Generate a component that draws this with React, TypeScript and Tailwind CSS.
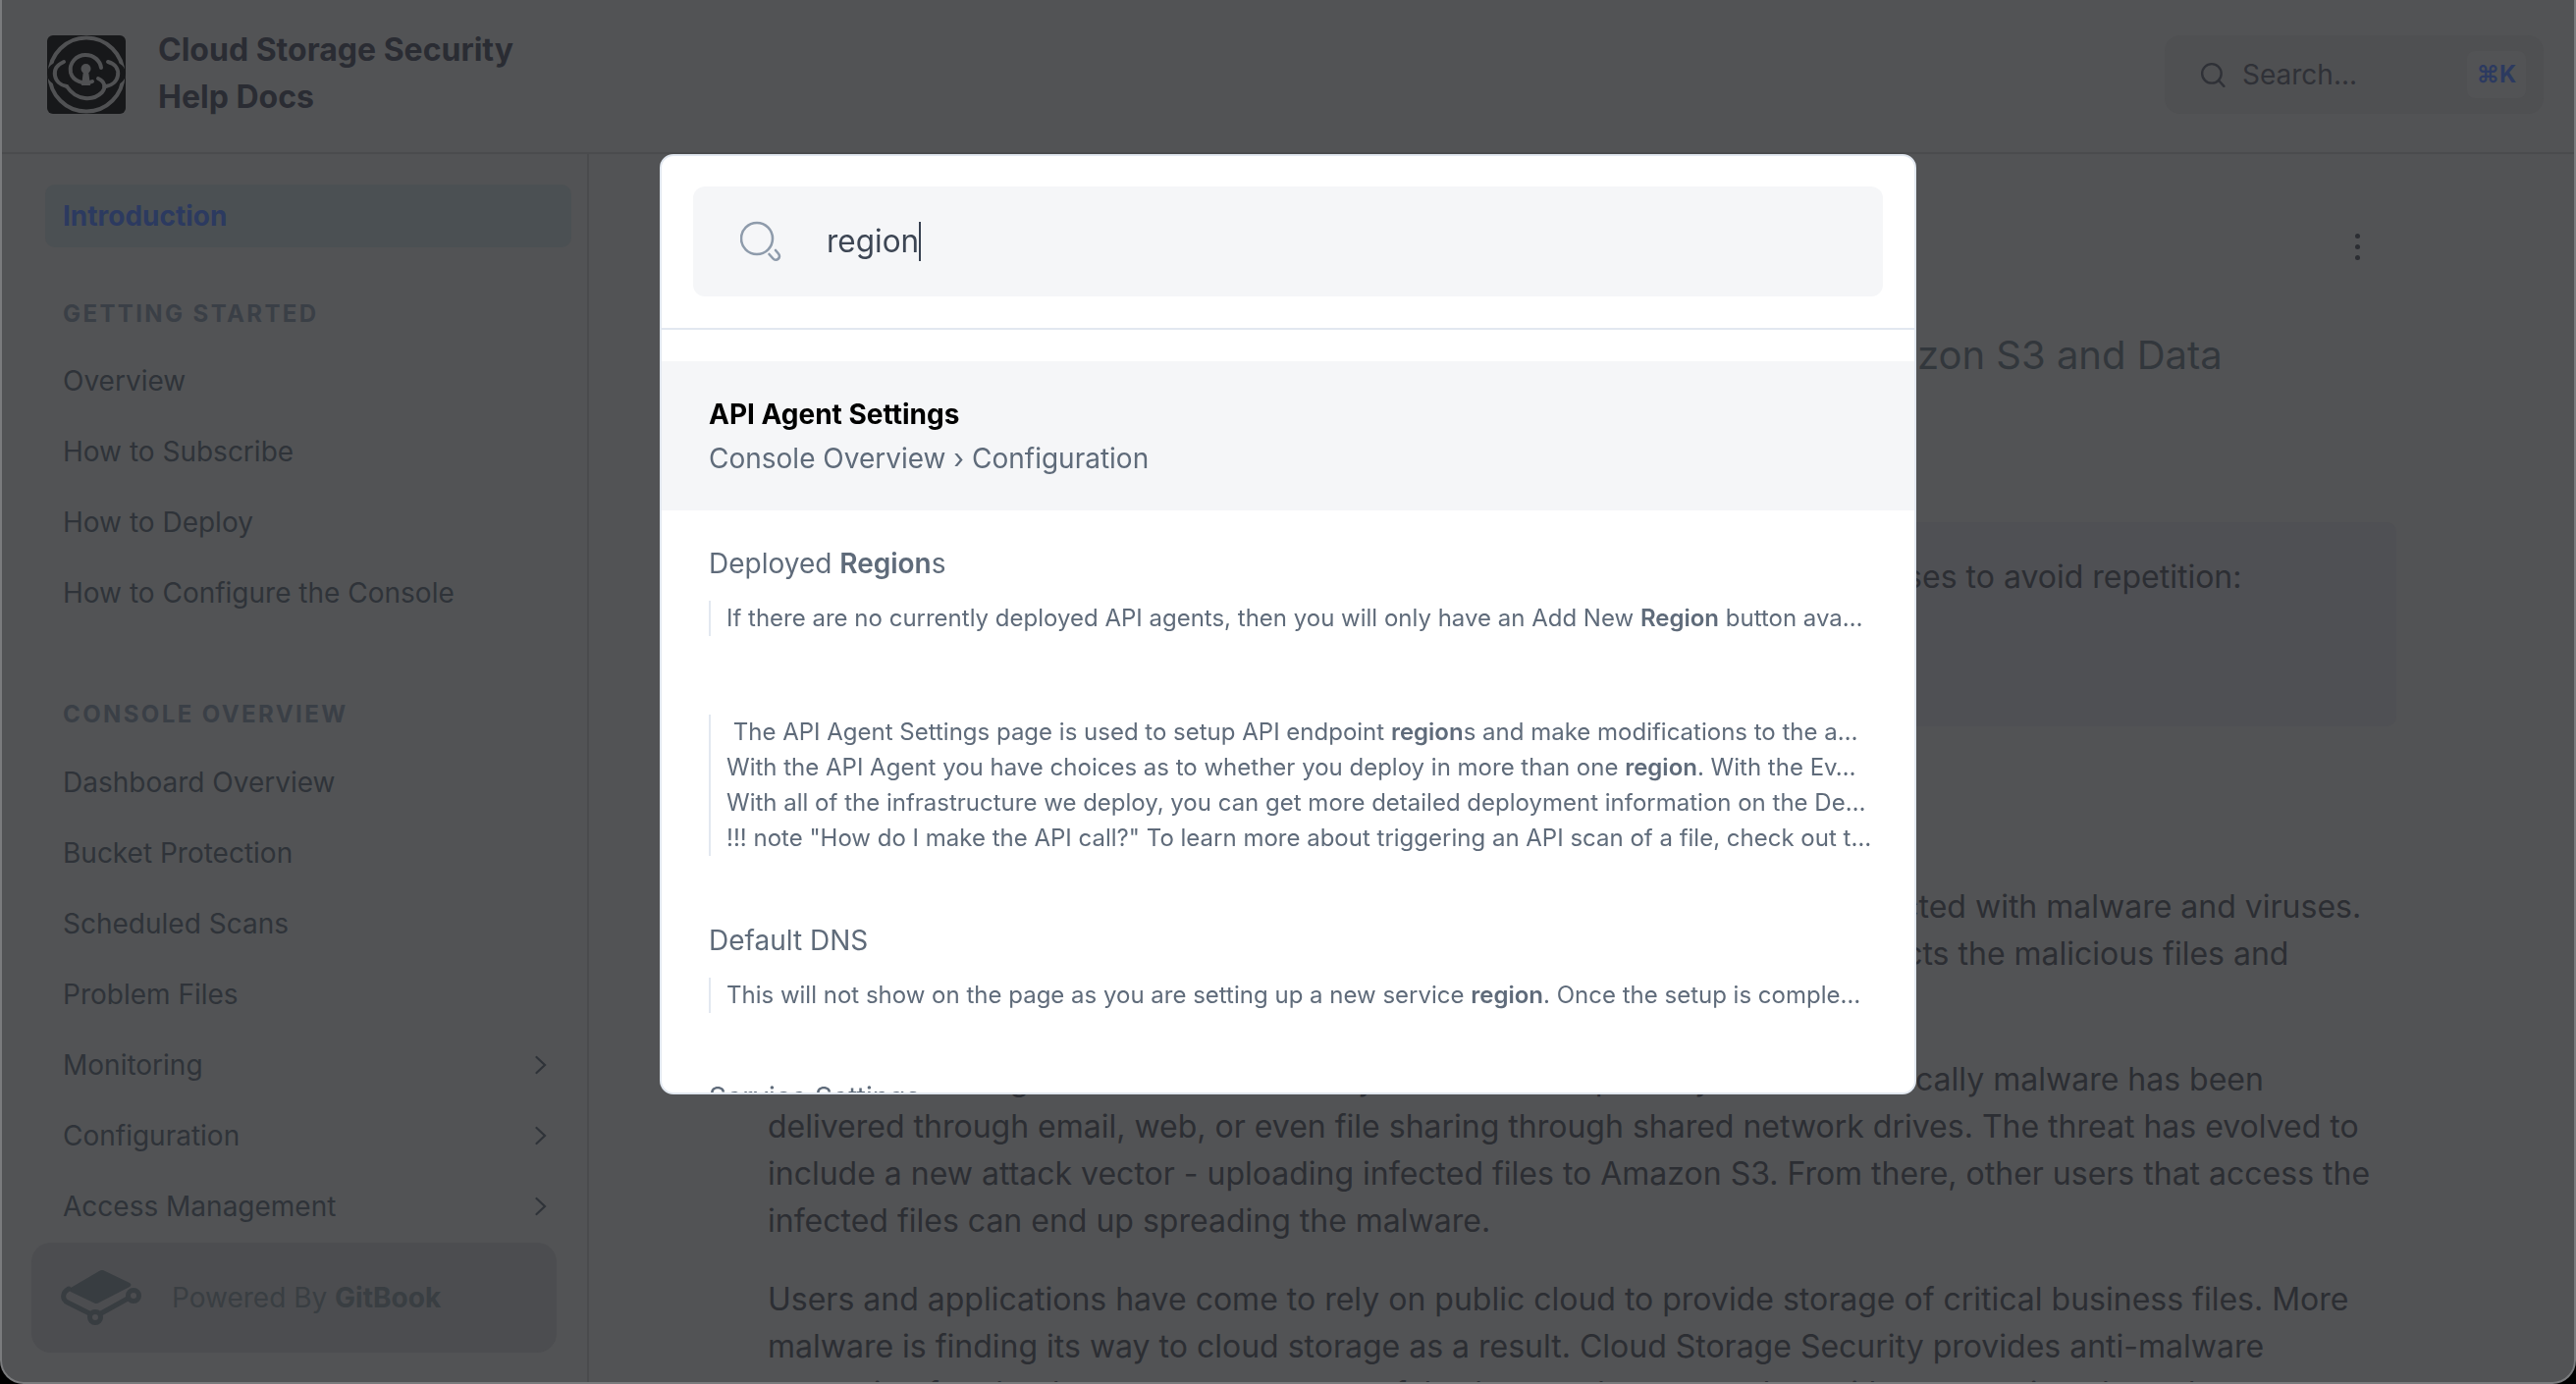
const gettingStarted = ["Overview", "How to Subscribe", "How to Deploy", "How to Configure the Console"];

const consoleOverview = [
  { label: "Dashboard Overview" },
  { label: "Bucket Protection" },
  { label: "Scheduled Scans" },
  { label: "Problem Files" },
  { label: "Monitoring", nested: true },
  { label: "Configuration", nested: true },
  { label: "Access Management", nested: true },
];

function Logo() {
  return (
    <svg viewBox="0 0 80 80" className="h-[80px] w-[80px] shrink-0">
      <rect width="80" height="80" rx="6" fill="#17181a" />
      <circle cx="40" cy="40" r="37.5" fill="none" stroke="#505153" strokeWidth="4" />
      <ellipse cx="13" cy="39" rx="13" ry="12" fill="#17181a" />
      <ellipse cx="67" cy="39" rx="13" ry="12" fill="#17181a" />
      <g fill="none" stroke="#505153" strokeWidth="4" strokeLinecap="round">
        <path d="M17 27 C10 30 7 35 8 41 C9 47 14 51 20 52" />
        <path d="M62 27 C70 29 73 35 72 41 C71 47 66 51 60 52" />
        <path d="M46 47 C37 51 26 46 24 38 C22 28 30 20 39 20 C48 20 54 26 55 33" />
        <path d="M52 44 C59 47 60 53 56 58 C47 67 30 67 20 52" />
      </g>
      <circle cx="39.5" cy="34" r="5" fill="#505153" />
      <path d="M37 36 L42 36 L44 51 L35 51 Z" fill="#505153" />
    </svg>
  );
}

function GitBookIcon() {
  return (
    <svg viewBox="0 0 84 62" className="h-[62px] w-[84px] shrink-0">
      <path
        d="M40 4 Q43 2 46 4 L71 16 Q74 18 71 20 L40 36 Q37 38 34 36 L11 25 Q8 23 11 21 Z"
        fill="#383d41"
      />
      <g fill="none" stroke="#383d41" strokeWidth="5" strokeLinecap="round">
        <path d="M9 22 C2 26 2 33 8 36 L30 47" />
        <path d="M42 47 L69 32" />
        <circle cx="36" cy="51" r="5.5" />
        <circle cx="75" cy="29" r="5.5" />
      </g>
    </svg>
  );
}

function SearchGlyph() {
  return (
    <svg viewBox="0 0 42 42" className="h-[42px] w-[42px] shrink-0" fill="none" stroke="#8e9bab" strokeWidth="2.6">
      <circle cx="17" cy="18" r="16" />
      <path d="M36 30 L39 33.5 A3.6 3.6 0 0 1 33.5 38.5 L29.5 34" strokeLinecap="round" />
    </svg>
  );
}

function Chevron() {
  return (
    <svg viewBox="0 0 14 20" className="h-[20px] w-[14px]" fill="none" stroke="#2f3339" strokeWidth="2.2" strokeLinecap="round">
      <path d="M2.5 2 L11 10 L2.5 18" />
    </svg>
  );
}

function SectionLabel({ children }: { children: React.ReactNode }) {
  return <div className="px-[18px] text-[24px] font-bold leading-[30px] tracking-[0.1em] text-[#3a3f46]">{children}</div>;
}

function NavItem({ label, nested }: { label: string; nested?: boolean }) {
  return (
    <div className="flex h-[72px] items-center justify-between pl-[18px] pr-[24px] text-[28px] text-[#2f3339]">
      <span>{label}</span>
      {nested && <Chevron />}
    </div>
  );
}

function Sidebar() {
  return (
    <aside className="flex w-[598px] shrink-0 flex-col border-r-2 border-[#4a4b4d] pl-[44px] pr-[16px]">
      <div className="mt-[31px] flex h-[64px] shrink-0 items-center rounded-[10px] bg-[#4b5053] px-[18px] text-[28px] font-bold text-[#2c3a60]">
        Introduction
      </div>
      <div className="mt-[53px]">
        <SectionLabel>GETTING STARTED</SectionLabel>
      </div>
      <div className="mt-[17px]">
        {gettingStarted.map((label) => (
          <NavItem key={label} label={label} />
        ))}
      </div>
      <div className="mt-[73px]">
        <SectionLabel>CONSOLE OVERVIEW</SectionLabel>
      </div>
      <div className="mt-[18px]">
        {consoleOverview.map((item) => (
          <NavItem key={item.label} label={item.label} nested={item.nested} />
        ))}
      </div>
      <div className="-ml-[14px] mt-[1px] flex h-[112px] w-[535px] shrink-0 items-center gap-[32px] rounded-[20px] bg-[#4c4d50] pl-[29px] text-[28px] text-[#393e42]">
        <GitBookIcon />
        <span className="-ml-[2px]">
          Powered By <b className="font-bold">GitBook</b>
        </span>
      </div>
    </aside>
  );
}

function Article() {
  return (
    <main className="min-w-0 flex-1 pl-[182px] pr-[181px] text-[32px] leading-[48px] text-[#2c2e33]">
      <div className="flex h-[181px] justify-end pr-[37px] pt-[81px]">
        <div className="flex flex-col gap-[6px]">
          <span className="h-[5px] w-[5px] rounded-full bg-[#2c2e33]" />
          <span className="h-[5px] w-[5px] rounded-full bg-[#2c2e33]" />
          <span className="h-[5px] w-[5px] rounded-full bg-[#2c2e33]" />
        </div>
      </div>
      <h2 className="whitespace-nowrap pl-[7px] text-[40px] leading-[48px] text-[#32373c]">
        Easy Antivirus for Amazon S3 and Data Classification for Amazon S3 and Data
      </h2>
      <div className="mt-[146px] h-[208px] rounded-[10px] bg-[#4f5054] pl-[47px] pr-[32px] pt-[32px]">
        Throughout the documentation we will use the following abbreviated phrases to avoid repetition:
      </div>
      <div className="mt-[160px] space-y-[32px]">
        <p>
          Amazon S3 buckets and the files stored in them can very easily become infected with malware and viruses.
          <br />
          Antivirus from Cloud Storage Security scans all objects in your buckets, detects the malicious files and
          <br />
          quarantines them before they can cause harm.
        </p>
        <p>
          Malware has long been a severe security threat to enterprise systems. Historically malware has been
          <br />
          delivered through email, web, or even file sharing through shared network drives. The threat has evolved to
          <br />
          include a new attack vector - uploading infected files to Amazon S3. From there, other users that access the
          <br />
          infected files can end up spreading the malware.
        </p>
        <p>
          Users and applications have come to rely on public cloud to provide storage of critical business files. More
          <br />
          malware is finding its way to cloud storage as a result. Cloud Storage Security provides anti-malware
          <br />
          protection for cloud storage so you can safely share and use your data without worrying about threats
        </p>
      </div>
    </main>
  );
}

function Excerpt({ children }: { children: React.ReactNode }) {
  return <div className="overflow-hidden text-ellipsis whitespace-pre">{children}</div>;
}

function SearchModal() {
  return (
    <div className="flex h-[958px] w-[1280px] flex-col overflow-hidden rounded-[14px] border-2 border-[#e2e8f0] bg-white">
      <div className="px-[32px] pb-[32px] pt-[31px]">
        <div className="flex h-[112px] items-center rounded-[12px] bg-[#f5f6f8] pl-[48px] text-[31.5px] text-[#3d4654]">
          <SearchGlyph />
          <span className="ml-[46px] border-r-2 border-[#374151] leading-[40px]">region</span>
        </div>
      </div>
      <div className="border-t-2 border-[#e2e8f0] pt-[32px]">
        <div className="flex h-[152px] flex-col justify-center bg-[#f5f6f8] pl-[48px]">
          <div className="text-[28px] font-bold leading-[44px] text-black">API Agent Settings</div>
          <div className="mt-[1px] text-[28px] leading-[44px] text-[#5f6b7a]">Console Overview › Configuration</div>
        </div>
        <div className="pl-[48px] pr-[34px] text-[24px] leading-[36px] text-[#5f6b7a]">
          <div className="mt-[32px] text-[28px] leading-[44px]">
            Deployed <b className="font-semibold">Region</b>s
          </div>
          <div className="mt-[16px] border-l-2 border-[#e2e8f0] pl-[16px]">
            <Excerpt>
              If there are no currently deployed API agents, then you will only have an Add New <b className="font-semibold">Region</b> button ava…
            </Excerpt>
          </div>
          <div className="mt-[80px] border-l-2 border-[#e2e8f0] pl-[16px]">
            <Excerpt> The API Agent Settings page is used to setup API endpoint <b className="font-semibold">region</b>s and make modifications to the a…</Excerpt>
            <Excerpt>
              With the API Agent you have choices as to whether you deploy in more than one <b className="font-semibold">region</b>. With the Ev…
            </Excerpt>
            <Excerpt>With all of the infrastructure we deploy, you can get more detailed deployment information on the De…</Excerpt>
            <Excerpt>!!! note "How do I make the API call?" To learn more about triggering an API scan of a file, check out t…</Excerpt>
          </div>
          <div className="mt-[64px] text-[28px] leading-[44px]">Default DNS</div>
          <div className="mt-[16px] border-l-2 border-[#e2e8f0] pl-[16px]">
            <Excerpt>
              This will not show on the page as you are setting up a new service <b className="font-semibold">region</b>. Once the setup is comple…
            </Excerpt>
          </div>
          <div className="mt-[64px] text-[28px] leading-[44px]">Service Settings</div>
        </div>
      </div>
    </div>
  );
}

export default function App() {
  return (
    <div className="relative h-[1410px] w-[2624px] overflow-hidden bg-black font-['Inter',sans-serif]">
      <div className="flex h-full flex-col overflow-hidden rounded-b-[24px] border-x-2 border-b-2 border-[#7a7b7d] bg-[#525355]">
        <header className="flex h-[157px] shrink-0 items-center border-b-2 border-[#4a4b4d] pb-[4px] pl-[46px] pr-[31px]">
          <Logo />
          <div className="-mt-[2px] ml-[33px] text-[32px] font-bold leading-[48px] text-[#2a2c33]">
            Cloud Storage Security
            <br />
            Help Docs
          </div>
          <div className="ml-auto flex h-[80px] w-[386px] items-center rounded-[16px] bg-[#4f5052] pl-[36px] pr-[18px] text-[28px] text-[#2f3137]">
            <svg viewBox="0 0 24 24" className="h-[26px] w-[26px]" fill="none" stroke="#2f3137" strokeWidth="2.2" strokeLinecap="round">
              <circle cx="11" cy="11" r="9" />
              <path d="M18 18 L22.5 23" />
            </svg>
            <span className="ml-[17px]">Search...</span>
            <span className="ml-auto flex h-[48px] w-[60px] items-center justify-center rounded-[8px] bg-[#525355] text-[24px] font-bold text-[#2c3a60]">
              ⌘K
            </span>
          </div>
        </header>
        <div className="flex min-h-0 flex-1">
          <Sidebar />
          <Article />
        </div>
      </div>
      <div className="absolute inset-0 flex justify-center pt-[157px] backdrop-blur-[0.5px]">
        <SearchModal />
      </div>
    </div>
  );
}
